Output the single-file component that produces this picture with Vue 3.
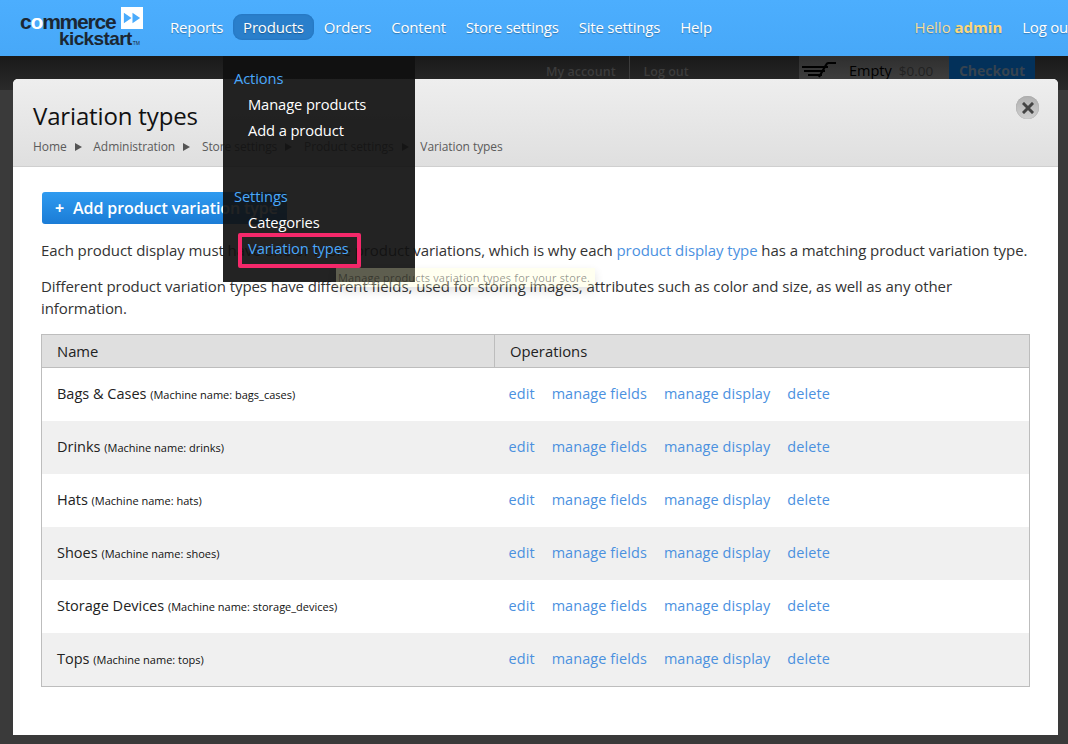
<script setup>
const nav = ['Reports', 'Products', 'Orders', 'Content', 'Store settings', 'Site settings', 'Help']
const crumbs = ['Home', 'Administration', 'Store settings', 'Product settings']
const rows = [
  ['Bags & Cases', 'bags_cases'],
  ['Drinks', 'drinks'],
  ['Hats', 'hats'],
  ['Shoes', 'shoes'],
  ['Storage Devices', 'storage_devices'],
  ['Tops', 'tops'],
]
const ops = ['edit', 'manage fields', 'manage display', 'delete']
</script>

<template>
  <div class="page">
    <header class="topbar">
      <div class="logo">
        <div class="logo-line1">
          <span class="logo-word">c<span class="logo-o">o</span>mmerce</span>
          <svg class="logo-mark" width="22" height="22" viewBox="0 0 23 23">
            <rect width="23" height="23" fill="#fff" />
            <path d="M3 6l8 5.5-8 5.5zM12 6l8 5.5-8 5.5z" fill="#4aabfc" />
          </svg>
        </div>
        <div class="logo-line2">kickstart<span class="tm">TM</span></div>
      </div>
      <nav class="nav">
        <a v-for="n in nav" :key="n" class="nav-item" :class="{ active: n === 'Products' }">{{ n }}</a>
      </nav>
      <div class="user">
        <span class="hello">Hello <b>admin</b></span>
        <span class="logout">Log out</span>
      </div>
    </header>

    <div class="toolbar">
      <span class="tb-link">My account</span>
      <span class="tb-sep"></span>
      <span class="tb-link">Log out</span>
      <div class="cart">
        <svg width="36" height="16" viewBox="0 0 36 16">
          <path d="M0 5h26M2 9h21M6 13h14" stroke="#000" stroke-width="2.2" fill="none" />
          <path d="M17 15L24 3q1-2 3-2h7" stroke="#000" stroke-width="2.2" fill="none" />
        </svg>
        <span class="cart-empty">Empty</span>
        <span class="cart-total">$0.00</span>
      </div>
      <span class="checkout">Checkout</span>
    </div>

    <main class="modal">
      <div class="modal-head">
        <h1>Variation types</h1>
        <div class="crumbs">
          <template v-for="c in crumbs" :key="c">
            <span>{{ c }}</span><i class="arrow"></i>
          </template>
          <span>Variation types</span>
        </div>
        <span class="close">
          <svg width="12" height="12" viewBox="0 0 12 12">
            <path d="M2 2l8 8M10 2l-8 8" stroke="#444" stroke-width="3" stroke-linecap="square" fill="none" />
          </svg>
        </span>
      </div>
      <div class="modal-body">
        <a class="add-btn"><span class="plus">+</span>Add product variation type</a>
        <p class="p1">Each product display must have one or more product variations, which is why each <a>product display type</a> has a matching product variation type.</p>
        <p class="p2">Different product variation types have different fields, used for storing images, attributes such as color and size, as well as any other information.</p>
        <table>
          <thead>
            <tr><th class="c1">Name</th><th>Operations</th></tr>
          </thead>
          <tbody>
            <tr v-for="r in rows" :key="r[1]">
              <td class="name">{{ r[0] }} <small>(Machine name: {{ r[1] }})</small></td>
              <td class="ops"><a v-for="o in ops" :key="o">{{ o }}</a></td>
            </tr>
          </tbody>
        </table>
      </div>
    </main>

    <div class="menu">
      <div class="menu-title">Actions</div>
      <a class="menu-item">Manage products</a>
      <a class="menu-item">Add a product</a>
      <div class="menu-title gap">Settings</div>
      <a class="menu-item">Categories</a>
      <a class="menu-item current">Variation types</a>
    </div>
    <div class="highlight"></div>
    <div class="tooltip">Manage products variation types for your store.</div>
  </div>
</template>

<style>
html, body { margin: 0; background: #3a3a3a; overflow: hidden; }
</style>

<style scoped>
.page {
  position: relative;
  width: 1068px;
  height: 744px;
  overflow: hidden;
  background: #3a3a3a;
  font-family: "Open Sans", sans-serif;
  color: #222;
}
a { text-decoration: none; }

.topbar {
  height: 56px;
  background: linear-gradient(#4caefe, #47a8f8);
  display: flex;
  align-items: center;
  padding-left: 20px;
  white-space: nowrap;
  box-sizing: border-box;
}
.logo { width: 133px; height: 48px; flex: none; font-family: "Liberation Sans", sans-serif; font-weight: 700; color: #1b2733; }
.logo-line1 { display: flex; align-items: flex-start; height: 24px; }
.logo-word { font-size: 21px; line-height: 26px; margin-top: 5px; letter-spacing: -1.2px; width: 101px; flex: none; }
.logo-o { color: #fff; }
.logo-mark { flex: none; margin-top: 3px; }
.logo-line2 { font-size: 19px; line-height: 20px; margin-top: 1px; padding-left: 39px; letter-spacing: -0.6px; }
.tm { font-size: 5px; font-weight: 400; margin-left: 1px; letter-spacing: 0; }
.nav { display: flex; margin-left: 7px; margin-top: -2px; }
.nav-item {
  color: #fff;
  font-size: 15px;
  letter-spacing: -0.2px;
  line-height: 26px;
  padding: 0 10px;
  text-shadow: 0 1px 1px rgba(0, 0, 0, .3);
  border-radius: 9px;
}
.nav-item.active { background: #2a7fcb; box-shadow: inset 0 0 2px #1f6db5; }
.user { margin-left: auto; margin-top: -2px; display: flex; gap: 20px; font-size: 15px; margin-right: -5px; text-shadow: 0 1px 1px rgba(0, 0, 0, .25); }
.hello { color: #f2dc9d; }
.hello b { color: #fcd77b; font-weight: 700; }
.logout { color: #fff; letter-spacing: -0.25px; }

.toolbar {
  height: 34px;
  background: linear-gradient(#191919, #2a2a2a);
  display: flex;
  align-items: flex-start;
  color: #000;
  white-space: nowrap;
  padding: 0 33px 0 546px;
  box-sizing: border-box;
}
.tb-link { line-height: 32px; color: #3c3c3c; font-weight: 600; font-size: 12.5px; }
.tb-sep { width: 1px; height: 23px; background: #3c3c3c; margin: 0 14px 0 13px; }
.cart {
  margin-left: auto;
  width: 150px;
  height: 34px;
  background: linear-gradient(#2e2e2e, #444);
  padding-left: 3px;
  box-sizing: border-box;
  display: flex;
  align-items: flex-start;
}
.cart svg { margin-top: 6px; flex: none; }
.cart-empty { font-size: 14.5px; line-height: 30px; margin-left: 11px; }
.cart-total { font-size: 13.5px; line-height: 30px; margin-left: 7px; color: #222; }
.checkout { background: #03315a; color: #36434f; font-weight: 700; font-size: 14px; width: 86px; height: 34px; line-height: 30px; text-align: center; }

.modal {
  position: absolute;
  left: 13px;
  top: 79px;
  width: 1045px;
  height: 656px;
  background: #fff;
  border-radius: 5px 5px 0 0;
  box-sizing: border-box;
}
.modal-head {
  position: relative;
  height: 88px;
  background: linear-gradient(#eeeeee, #dfdfdf);
  border-radius: 5px 5px 0 0;
  border-bottom: 1px solid #cfcfcf;
  box-sizing: border-box;
  padding: 20px 0 0 20px;
}
h1 { margin: 0; font-size: 24px; font-weight: 400; line-height: 34px; color: #111; letter-spacing: -0.15px; }
.crumbs { display: flex; align-items: center; font-size: 12px; color: #5b5b5b; line-height: 20px; margin-top: 4px; letter-spacing: -0.08px; }
.arrow { width: 0; height: 0; border-left: 7px solid #555; border-top: 4px solid transparent; border-bottom: 4px solid transparent; margin: 0 11.75px 0 8px; }
.close {
  position: absolute;
  right: 19px;
  top: 17px;
  width: 23px;
  height: 23px;
  border-radius: 50%;
  background: linear-gradient(#b0b0b0, #cfcfcf);
  box-shadow: inset 0 0 1px #888;
  display: flex;
  align-items: center;
  justify-content: center;
}

.modal-body { padding: 25px 28px 0 28px; }
.add-btn {
  display: block;
  width: 245px;
  height: 32px;
  margin-left: 1px;
  line-height: 32px;
  background: linear-gradient(#2f9bf0, #1b7cd6);
  border-radius: 3px;
  color: #fff;
  font-size: 16px;
  font-weight: 600;
  letter-spacing: -0.1px;
  padding-left: 13px;
  box-sizing: border-box;
  white-space: nowrap;
}
.plus { margin-right: 9px; font-weight: 700; }
p { margin: 0; font-size: 15px; line-height: 22px; color: #333; letter-spacing: -0.07px; }
.p1 { margin-top: 15px; white-space: nowrap; }
.p1 a { color: #4b91df; }
.p2 { margin-top: 14px; width: 960px; }

table {
  margin-top: 15px;
  width: 989px;
  border-collapse: collapse;
  border: 1px solid #bdbdbd;
  font-size: 14.5px;
  table-layout: fixed;
}
th {
  background: #dfdfdf;
  height: 33px;
  text-align: left;
  font-weight: 400;
  padding: 0 0 0 15px;
  color: #222;
  font-size: 14.8px;
  border-bottom: 1px solid #bdbdbd;
  box-sizing: border-box;
}
th.c1 { width: 453px; border-right: 1px solid #bdbdbd; }
td { height: 53px; padding: 0 0 2px 15px; box-sizing: border-box; }
tbody tr:last-child td { height: 54px; }
tbody tr:nth-child(even) { background: #f0f0f0; }
.name { color: #222; }
.name small { font-size: 11px; color: #111; }
td.ops { padding-left: 14px; }
.ops a { color: #4b91df; margin-right: 17px; font-size: 14.45px; letter-spacing: 0.1px; }

.menu {
  position: absolute;
  left: 223px;
  top: 56px;
  width: 192px;
  height: 226px;
  background: rgba(16, 16, 16, .92);
  box-sizing: border-box;
  padding: 9px 0 0 11px;
  font-size: 14.7px;
  letter-spacing: -0.1px;
  line-height: 26px;
}
.menu-title { color: #4aa8fb; }
.menu-title.gap { margin-top: 40px; }
.menu-item { display: block; color: #fff; padding-left: 14px; }
.menu-item.current { color: #4aa8fb; }
.highlight {
  position: absolute;
  left: 238px;
  top: 233px;
  width: 123px;
  height: 35px;
  border: 4px solid #f5286a;
  border-radius: 2px;
  box-sizing: border-box;
}
.tooltip {
  position: absolute;
  left: 336px;
  top: 268px;
  width: 259px;
  height: 19px;
  background: rgba(255, 255, 200, .27);
  box-shadow: 0 4px 10px rgba(0, 0, 0, .12);
  color: rgba(0, 0, 0, .42);
  font-size: 11px;
  letter-spacing: .17px;
  line-height: 20px;
  padding-left: 2px;
  box-sizing: border-box;
  white-space: nowrap;
}
</style>
